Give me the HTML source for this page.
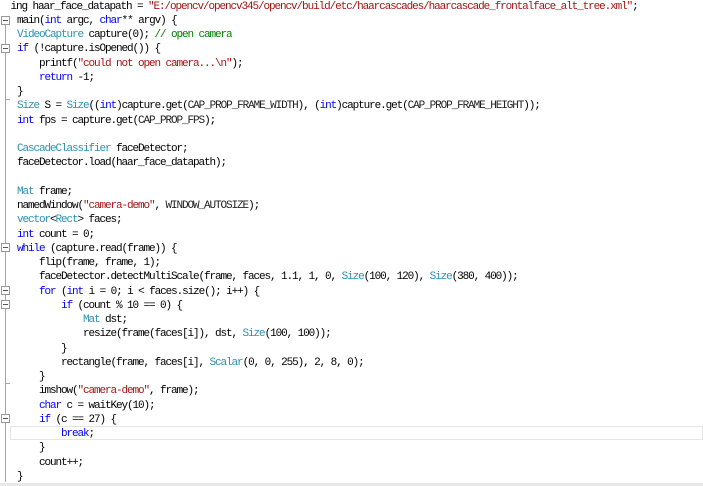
<!DOCTYPE html>
<html><head><meta charset="utf-8"><style>
html,body{margin:0;padding:0;background:#fff;width:703px;height:486px;overflow:hidden;position:relative}
.l{position:absolute;left:17px;height:14px;line-height:14px;font-family:"Liberation Mono",monospace;font-size:11px;letter-spacing:-1.1px;color:#000;white-space:pre}
.k{color:#0000ff}.t{color:#2b91af}.s{color:#a31515}.c{color:#008000}.m{color:#222}
.fold{position:absolute;left:1px;width:7px;height:7px;border:1px solid #999;background:#fff}
.fold:after{content:"";position:absolute;left:1px;top:3px;width:5px;height:1px;background:#555}
.vl{position:absolute;left:5px;width:1px;background:#a5a5a5}
.tick{position:absolute;left:5px;width:5px;height:1px;background:#a5a5a5}
.cur{position:absolute;left:10px;right:0;top:426px;height:12px;border:1px solid #e5e5e5}
.bar{position:absolute;left:0;right:0;top:483px;height:3px;background:#e8e8e8}
</style></head><body>
<div class="vl" style="top:22px;height:460px"></div>
<div class="cur"></div>
<div class="fold" style="top:16px"></div>
<div class="fold" style="top:44px"></div>
<div class="fold" style="top:243px"></div>
<div class="fold" style="top:286px"></div>
<div class="fold" style="top:300px"></div>
<div class="fold" style="top:414px"></div>
<div class="tick" style="top:99px"></div>
<div class="tick" style="top:383px"></div>
<div class="l" style="top:0px;left:5px"> ing haar_face_datapath = <span class="s">"E:/opencv/opencv345/opencv/build/etc/haarcascades/haarcascade_frontalface_alt_tree.xml"</span>;</div>
<div class="l" style="top:14px">main(<span class="k">int</span> argc, <span class="k">char</span>** argv) {</div>
<div class="l" style="top:28px"><span class="t">VideoCapture</span> capture(0); <span class="c">// open camera</span></div>
<div class="l" style="top:42px"><span class="k">if</span> (!capture.isOpened()) {</div>
<div class="l" style="top:57px">    printf(<span class="s">"could not open camera...\n"</span>);</div>
<div class="l" style="top:71px">    <span class="k">return</span> -1;</div>
<div class="l" style="top:85px">}</div>
<div class="l" style="top:99px"><span class="t">Size</span> S = <span class="t">Size</span>((<span class="k">int</span>)capture.get(<span class="m">CAP_PROP_FRAME_WIDTH</span>), (<span class="k">int</span>)capture.get(<span class="m">CAP_PROP_FRAME_HEIGHT</span>));</div>
<div class="l" style="top:114px"><span class="k">int</span> fps = capture.get(<span class="m">CAP_PROP_FPS</span>);</div>
<div class="l" style="top:142px"><span class="t">CascadeClassifier</span> faceDetector;</div>
<div class="l" style="top:156px">faceDetector.load(haar_face_datapath);</div>
<div class="l" style="top:185px"><span class="t">Mat</span> frame;</div>
<div class="l" style="top:199px">namedWindow(<span class="s">"camera-demo"</span>, <span class="m">WINDOW_AUTOSIZE</span>);</div>
<div class="l" style="top:213px"><span class="t">vector</span>&lt;<span class="t">Rect</span>&gt; faces;</div>
<div class="l" style="top:228px"><span class="k">int</span> count = 0;</div>
<div class="l" style="top:242px"><span class="k">while</span> (capture.read(frame)) {</div>
<div class="l" style="top:256px">    flip(frame, frame, 1);</div>
<div class="l" style="top:270px">    faceDetector.detectMultiScale(frame, faces, 1.1, 1, 0, <span class="t">Size</span>(100, 120), <span class="t">Size</span>(380, 400));</div>
<div class="l" style="top:285px">    <span class="k">for</span> (<span class="k">int</span> i = 0; i &lt; faces.size(); i++) {</div>
<div class="l" style="top:299px">        <span class="k">if</span> (count % 10 == 0) {</div>
<div class="l" style="top:313px">            <span class="t">Mat</span> dst;</div>
<div class="l" style="top:327px">            resize(frame(faces[i]), dst, <span class="t">Size</span>(100, 100));</div>
<div class="l" style="top:342px">        }</div>
<div class="l" style="top:356px">        rectangle(frame, faces[i], <span class="t">Scalar</span>(0, 0, 255), 2, 8, 0);</div>
<div class="l" style="top:370px">    }</div>
<div class="l" style="top:384px">    imshow(<span class="s">"camera-demo"</span>, frame);</div>
<div class="l" style="top:399px">    <span class="k">char</span> c = waitKey(10);</div>
<div class="l" style="top:413px">    <span class="k">if</span> (c == 27) {</div>
<div class="l" style="top:427px">        <span class="k">break</span>;</div>
<div class="l" style="top:441px">    }</div>
<div class="l" style="top:456px">    count++;</div>
<div class="l" style="top:470px">}</div>
<div class="bar"></div>
</body></html>
